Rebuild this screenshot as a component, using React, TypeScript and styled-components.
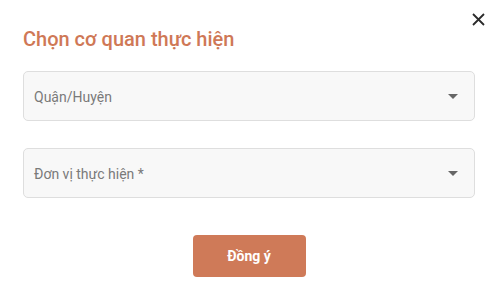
import React from "react";
import styled, { createGlobalStyle } from "styled-components";

const Global = createGlobalStyle`
  html, body { margin: 0; padding: 0; background: #ffffff; }
  body { font-family: Roboto, "Noto Sans", sans-serif; }
  * { box-sizing: border-box; }
`;

const Dialog = styled.div`
  position: relative;
  width: 499px;
  height: 301px;
  background: #ffffff;
  display: flex;
  flex-direction: column;
  padding: 27px 24px 0 23px;
`;

const Title = styled.h2`
  margin: 0;
  font-size: 20px;
  line-height: 24px;
  font-weight: 500;
  color: #cf7856;
`;

const CloseButton = styled.button`
  position: absolute;
  top: 13px;
  right: 14px;
  width: 13px;
  height: 13px;
  padding: 0;
  border: none;
  background: transparent;
  display: flex;
  cursor: pointer;
`;

const Fields = styled.div`
  display: flex;
  flex-direction: column;
  gap: 27px;
  margin-top: 20px;
`;

const Select = styled.div`
  height: 50px;
  border: 1px solid #dedede;
  border-radius: 5px;
  background: #f8f8f8;
  display: flex;
  align-items: center;
  justify-content: space-between;
  padding: 1px 16px 0 10px;
`;

const Placeholder = styled.span`
  font-size: 14px;
  font-weight: 400;
  color: #7a7a7a;
`;

const Footer = styled.div`
  display: flex;
  justify-content: center;
  margin-top: 37px;
`;

const Submit = styled.button`
  width: 113px;
  height: 42px;
  border: none;
  border-radius: 4px;
  background: #cf7a58;
  color: #ffffff;
  font-family: Roboto, "Noto Sans", sans-serif;
  font-size: 14px;
  font-weight: 700;
  cursor: pointer;
`;

const Caret = () => (
  <svg width="10" height="5" viewBox="0 0 10 5">
    <path d="M0 0 L10 0 L5 5 Z" fill="#666666" />
  </svg>
);

export default function App() {
  return (
    <>
      <Global />
      <Dialog>
        <CloseButton aria-label="close">
          <svg width="13" height="13" viewBox="0 0 13 13">
            <path d="M1 1 L12 12 M12 1 L1 12" stroke="#2b2b2b" strokeWidth="1.8" />
          </svg>
        </CloseButton>
        <Title>Chọn cơ quan thực hiện</Title>
        <Fields>
          <Select>
            <Placeholder>Quận/Huyện</Placeholder>
            <Caret />
          </Select>
          <Select>
            <Placeholder>Đơn vị thực hiện *</Placeholder>
            <Caret />
          </Select>
        </Fields>
        <Footer>
          <Submit>Đồng ý</Submit>
        </Footer>
      </Dialog>
    </>
  );
}
